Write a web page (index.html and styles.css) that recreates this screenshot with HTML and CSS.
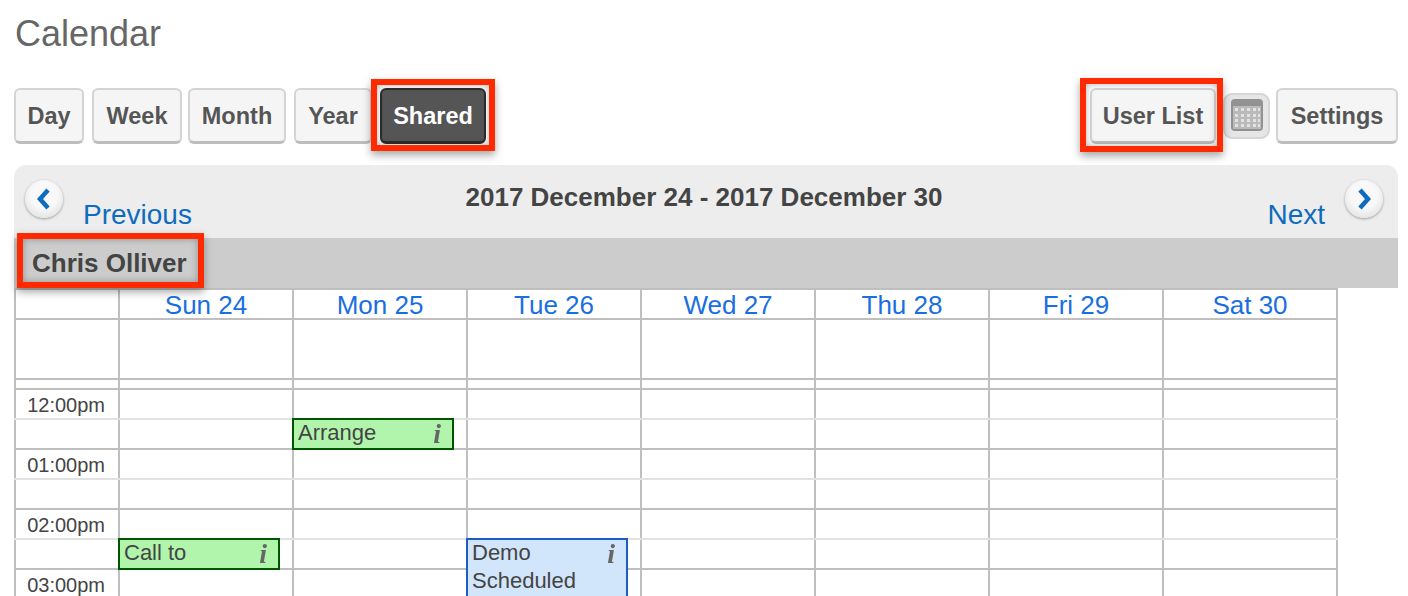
FILE: index.html
```html
<!DOCTYPE html>
<html lang="en">
<head>
    <meta charset="UTF-8">
    <meta name="viewport" content="width=device-width, initial-scale=1.0">
    <title>Calendar</title>
    <link rel="stylesheet" href="styles.css">
</head>
<body>
    <h1 class="page-title">Calendar</h1>
    <div class="toolbar">
        <a href="#" class="btn btn-day">Day</a>
        <a href="#" class="btn btn-week">Week</a>
        <a href="#" class="btn btn-month">Month</a>
        <a href="#" class="btn btn-year">Year</a>
        <a href="#" class="btn btn-shared active marked">Shared</a>
        <a href="#" class="btn btn-users marked">User List</a>
        <a href="#" class="cal-btn">
            <svg class="cal-icon" width="32" height="32" viewBox="0 0 32 32">
                <rect x="0" y="0" width="32" height="32" rx="4" fill="#929292"/>
                <rect x="2" y="7" width="28" height="23" fill="#bababa"/>
                <g fill="#e2e2e2">
                    <rect x="4" y="9" width="3" height="3"/><rect x="10" y="9" width="3" height="3"/><rect x="16" y="9" width="3" height="3"/><rect x="22" y="9" width="3" height="3"/><rect x="27" y="9" width="2" height="3"/>
                    <rect x="4" y="15" width="3" height="3"/><rect x="10" y="15" width="3" height="3"/><rect x="16" y="15" width="3" height="3"/><rect x="22" y="15" width="3" height="3"/><rect x="27" y="15" width="2" height="3"/>
                    <rect x="4" y="20" width="3" height="3"/><rect x="10" y="20" width="3" height="3"/><rect x="16" y="20" width="3" height="3"/><rect x="22" y="20" width="3" height="3"/><rect x="27" y="20" width="2" height="3"/>
                    <rect x="4" y="25" width="3" height="3"/><rect x="10" y="25" width="3" height="3"/><rect x="16" y="25" width="3" height="3"/><rect x="22" y="25" width="3" height="3"/><rect x="27" y="25" width="2" height="3"/>
                </g>
            </svg>
        </a>
        <a href="#" class="btn btn-settings">Settings</a>
    </div>

    <div class="nav-bar">
        <div class="nav-side">
            <a href="#" class="round-btn">
                <svg width="16" height="24" viewBox="0 0 16 24"><path d="M12 3 L4 12 L12 21" fill="none" stroke="#0d6cbd" stroke-width="4.5"/></svg>
            </a>
            <a href="#" class="nav-link nav-prev">Previous</a>
        </div>
        <div class="nav-title">2017 December 24 - 2017 December 30</div>
        <div class="nav-side nav-side-right">
            <a href="#" class="nav-link nav-next">Next</a>
            <a href="#" class="round-btn">
                <svg width="16" height="24" viewBox="0 0 16 24"><path d="M4 3 L12 12 L4 21" fill="none" stroke="#0d6cbd" stroke-width="4.5"/></svg>
            </a>
        </div>
    </div>

    <div class="user-bar"><span class="user-name">Chris Olliver</span></div>

    <table class="cal">
        <colgroup>
            <col class="col-time">
            <col class="col-day"><col class="col-day"><col class="col-day"><col class="col-day"><col class="col-day"><col class="col-day"><col class="col-day">
        </colgroup>
        <thead>
            <tr class="row-head">
                <th></th>
                <th>Sun 24</th><th>Mon 25</th><th>Tue 26</th><th>Wed 27</th><th>Thu 28</th><th>Fri 29</th><th>Sat 30</th>
            </tr>
        </thead>
        <tbody>
            <tr class="row-allday"><td></td><td></td><td></td><td></td><td></td><td></td><td></td><td></td></tr>
            <tr class="row-gap"><td></td><td></td><td></td><td></td><td></td><td></td><td></td><td></td></tr>
            <tr class="row-hour"><td class="time">12:00pm</td><td></td><td></td><td></td><td></td><td></td><td></td><td></td></tr>
            <tr class="row-half">
                <td></td><td></td>
                <td><div class="event event-green"><span>Arrange</span><i class="info">i</i></div></td>
                <td></td><td></td><td></td><td></td><td></td>
            </tr>
            <tr class="row-hour"><td class="time">01:00pm</td><td></td><td></td><td></td><td></td><td></td><td></td><td></td></tr>
            <tr class="row-half"><td></td><td></td><td></td><td></td><td></td><td></td><td></td><td></td></tr>
            <tr class="row-hour"><td class="time">02:00pm</td><td></td><td></td><td></td><td></td><td></td><td></td><td></td></tr>
            <tr class="row-half">
                <td></td>
                <td><div class="event event-green"><span>Call to</span><i class="info">i</i></div></td>
                <td></td>
                <td><div class="event event-blue event-tall"><span>Demo<br>Scheduled</span><i class="info">i</i></div></td>
                <td></td><td></td><td></td><td></td>
            </tr>
            <tr class="row-hour"><td class="time">03:00pm</td><td></td><td></td><td></td><td></td><td></td><td></td><td></td></tr>
        </tbody>
    </table>
</body>
</html>
```

FILE: styles.css
```css
html, body {
    height: 100%;
    overflow: hidden;
}
body {
    font-family: "Liberation Sans", Arial, sans-serif;
    margin: 0;
    padding: 0 10px 0 14px;
    background-color: #fff;
    color: #444;
}
a {
    text-decoration: none;
}
.page-title {
    margin: 0;
    padding: 13px 0 0 1px;
    height: 88px;
    box-sizing: border-box;
    font-size: 36px;
    line-height: 42px;
    font-weight: normal;
    color: #666;
}

/* top buttons */
.toolbar {
    display: flex;
    align-items: center;
    height: 56px;
}
.btn {
    position: relative;
    display: flex;
    align-items: center;
    justify-content: center;
    box-sizing: border-box;
    height: 56px;
    padding-top: 2px;
    background-color: #f5f5f5;
    border: 2px solid #d4d4d4;
    border-bottom: 3px solid #bdbdbd;
    border-radius: 6px;
    color: #555;
    font-size: 23.5px;
    font-weight: bold;
}
.btn-day { width: 70px; }
.btn-week { width: 90px; margin-left: 8px; }
.btn-month { width: 98px; margin-left: 6px; }
.btn-year { width: 78px; margin-left: 8px; }
.btn-shared { width: 106px; margin-left: 8px; }
.btn-users { width: 126px; margin-left: auto; }
.btn-settings { width: 122px; margin-left: 6px; }
.btn.active {
    background-color: #555;
    border-color: #2e2e2e;
    color: #fff;
}
.marked::after {
    content: "";
    position: absolute;
    border: 6px solid #ff2a00;
    box-shadow: 0 4px 8px rgba(0,0,0,0.35), inset 0 0 7px rgba(0,0,0,0.3);
}
.btn-shared::after {
    top: -11px;
    left: -11px;
    right: -11px;
    bottom: -10px;
}
.btn-users::after {
    top: -12px;
    left: -12px;
    right: -9px;
    bottom: -11px;
}
.cal-btn {
    display: flex;
    align-items: center;
    justify-content: center;
    box-sizing: border-box;
    width: 47px;
    height: 46px;
    margin-left: 7px;
    padding-bottom: 2px;
    background-color: #e6e6e6;
    border: 2px solid #d6d6d6;
    border-radius: 9px;
}
.cal-icon {
    filter: blur(0.7px);
}

/* previous / next bar */
.nav-bar {
    display: grid;
    grid-template-columns: 1fr auto 1fr;
    box-sizing: border-box;
    height: 73px;
    margin-top: 21px;
    padding: 15px 15px 0 11px;
    background-color: #ededed;
    border-radius: 12px 12px 0 0;
}
.nav-side {
    display: flex;
    align-items: flex-start;
}
.nav-side-right {
    justify-content: flex-end;
}
.round-btn {
    display: flex;
    align-items: center;
    justify-content: center;
    width: 38px;
    height: 38px;
    border-radius: 50%;
    background: radial-gradient(circle at 50% 40%, #f8f8f8 45%, #d8d8d8 100%);
    box-shadow: 0 1px 3px rgba(0,0,0,0.35);
}
.nav-link {
    margin-top: 19px;
    font-size: 28px;
    line-height: 32px;
    color: #0d6cbd;
}
.nav-prev {
    margin-left: 20px;
}
.nav-next {
    margin-right: 20px;
}
.nav-title {
    font-size: 26px;
    line-height: 34px;
    font-weight: bold;
    color: #444;
}

/* user row */
.user-bar {
    height: 50px;
    background-color: #ccc;
}
.user-name {
    position: relative;
    display: inline-block;
    margin: 8px 0 0 18px;
    font-size: 26px;
    line-height: 34px;
    font-weight: bold;
    color: #444;
}
.user-name::after {
    content: "";
    position: absolute;
    top: -13px;
    left: -15px;
    right: -17px;
    bottom: -8px;
    border: 6px solid #ff2a00;
    box-shadow: 0 4px 8px rgba(0,0,0,0.35), inset 0 0 7px rgba(0,0,0,0.3);
}

/* calendar grid */
.cal {
    table-layout: fixed;
    border-collapse: collapse;
    width: 1322px;
}
.col-time { width: 104px; }
.col-day { width: 174px; }
.cal th,
.cal td {
    padding: 0;
    border: 2px solid #bfbfbf;
    position: relative;
}
.cal th {
    padding-top: 2px;
    font-size: 26px;
    font-weight: normal;
    color: #1a6fe0;
    line-height: 26px;
}
.row-head { height: 30px; }
.row-allday { height: 60px; }
.row-gap { height: 10px; }
.row-hour { height: 30px; }
.row-half { height: 30px; }
.cal .row-hour td {
    border-bottom-color: #e2e2e2;
}
.cal .row-half td {
    border-top-color: #e2e2e2;
}
.cal .time {
    padding: 2px 13px 0 0;
    font-size: 20px;
    line-height: 26px;
    text-align: right;
    color: #444;
}

/* events sit on top of the grid lines */
.event {
    position: absolute;
    top: -2px;
    left: -2px;
    z-index: 2;
    box-sizing: border-box;
    width: 162px;
    height: 32px;
    padding: 0 4px;
    display: flex;
    justify-content: space-between;
    border: 2px solid #005500;
    font-size: 22px;
    line-height: 28px;
    color: #444;
}
.event span {
    margin-top: -1px;
}
.event-green {
    background-color: #b1f5ad;
}
.event-blue {
    background-color: #d2e6fb;
    border-color: #1a5fc0;
}
.event-tall {
    height: 90px;
}
.info {
    font-family: "Liberation Serif", serif;
    font-weight: bold;
    font-size: 28px;
    line-height: 28px;
    color: #666;
    padding-right: 7px;
    filter: blur(0.6px);
}
```
